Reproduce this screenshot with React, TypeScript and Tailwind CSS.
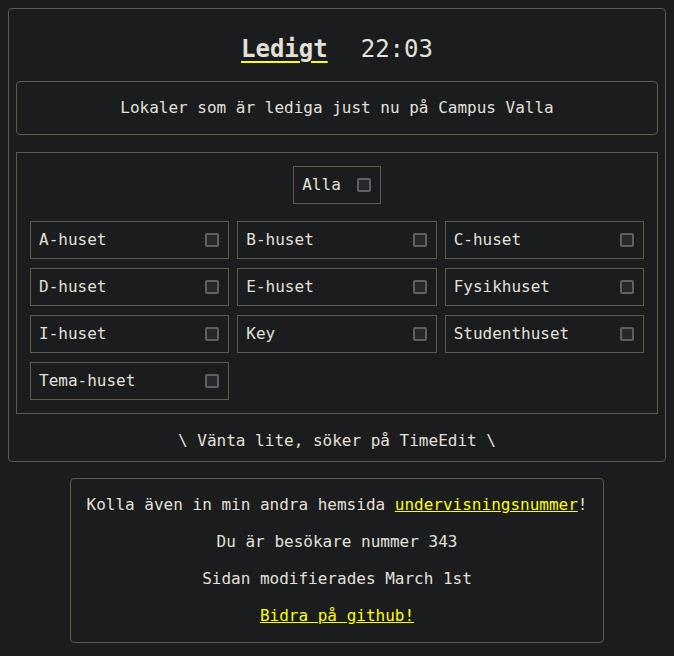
import React from 'react'

const buildings = [
  'A-huset',
  'B-huset',
  'C-huset',
  'D-huset',
  'E-huset',
  'Fysikhuset',
  'I-huset',
  'Key',
  'Studenthuset',
  'Tema-huset',
]

function Box() {
  return <span className="block w-[14px] h-[14px] rounded-[2px] border-2 border-[#5d5f62] bg-[#26282b]" />
}

function Option({ label }: { label: string }) {
  return (
    <label className="flex items-center justify-between h-[38px] border border-[#5f5b47] pl-2 pr-[9px]">
      <span>{label}</span>
      <Box />
    </label>
  )
}

export default function App() {
  return (
    <div
      className="min-h-screen bg-[#1b1c1e] text-[#e3e0d8] text-base leading-6 p-2"
      style={{ fontFamily: '"DejaVu Sans Mono", "Liberation Mono", monospace' }}
    >
      {/* Main card */}
      <div className="border border-[#5f5b47] rounded px-[7px] pt-6 pb-2">
        <h1 className="flex justify-center items-baseline gap-[33px] text-2xl leading-8">
          <span className="font-bold underline decoration-[#ffff00] underline-offset-4 decoration-2">Ledigt</span>
          <span>22:03</span>
        </h1>

        <div className="mt-4 border border-[#5f5b47] rounded h-[54px] flex items-center justify-center">
          Lokaler som är lediga just nu på Campus Valla
        </div>

        <div className="mt-[17px] border border-[#5f5b47] px-[13px] pt-[13px] pb-[13px]">
          <div className="flex justify-center">
            <label className="flex items-center gap-4 h-[38px] border border-[#5f5b47] pl-2 pr-[9px]">
              <span>Alla</span>
              <Box />
            </label>
          </div>
          <div className="mt-[17px] grid grid-cols-3 gap-x-2 gap-y-[9px]">
            {buildings.map((b) => (
              <Option key={b} label={b} />
            ))}
          </div>
        </div>

        <p className="mt-[15px] text-center">\ Vänta lite, söker på TimeEdit \</p>
      </div>

      {/* Footer */}
      <div className="flex justify-center mt-4">
        <div className="border border-[#5f5b47] rounded w-[534px] py-[14px] flex flex-col items-center gap-[13px]">
          <p>
            Kolla även in min andra hemsida{' '}
            <a className="text-[#ffff00] underline">undervisningsnummer</a>!
          </p>
          <p>Du är besökare nummer 343</p>
          <p>Sidan modifierades March 1st</p>
          <a className="text-[#ffff00] underline">Bidra på github!</a>
        </div>
      </div>
    </div>
  )
}
